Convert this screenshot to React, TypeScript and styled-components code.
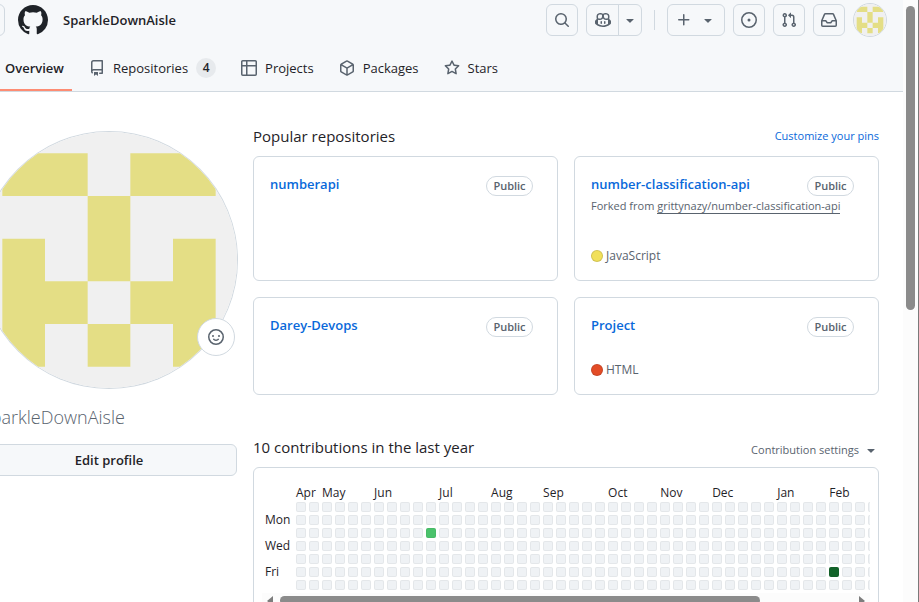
import React from "react";
import styled, { createGlobalStyle } from "styled-components";

const GlobalStyle = createGlobalStyle`
  *, *::before, *::after { box-sizing: border-box; }
  body {
    margin: 0;
    overflow: hidden;
    background: #ffffff;
    color: #1f2328;
    font-family: "Open Sans", "Noto Sans", sans-serif;
    font-size: 13px;
    line-height: 20px;
  }
  h1, h2, ul { margin: 0; padding: 0; }
  ul { list-style: none; }
  button { font: inherit; color: inherit; cursor: pointer; }
  a { color: inherit; text-decoration: none; }
`;

/* ---------- icons ---------- */

const paths = {
  mark: "M8 0c4.42 0 8 3.58 8 8a8.013 8.013 0 0 1-5.45 7.59c-.4.08-.55-.17-.55-.38 0-.27.01-1.13.01-2.2 0-.75-.25-1.23-.54-1.48 1.78-.2 3.65-.88 3.65-3.95 0-.88-.31-1.59-.82-2.15.08-.2.36-1.02-.08-2.12 0 0-.67-.22-2.2.82-.64-.18-1.32-.27-2-.27-.68 0-1.36.09-2 .27-1.53-1.03-2.2-.82-2.2-.82-.44 1.1-.16 1.92-.08 2.12-.51.56-.82 1.28-.82 2.15 0 3.06 1.86 3.75 3.64 3.95-.23.2-.44.55-.51 1.07-.46.21-1.61.55-2.33-.66-.15-.24-.6-.83-1.23-.82-.67.01-.27.38.01.53.34.19.73.9.82 1.13.16.45.68 1.31 2.69.94 0 .67.01 1.3.01 1.49 0 .21-.15.45-.55.38A7.995 7.995 0 0 1 0 8c0-4.42 3.58-8 8-8Z",
  search:
    "M10.68 11.74a6 6 0 0 1-7.922-8.982 6 6 0 0 1 8.982 7.922l3.04 3.04a.749.749 0 0 1-.326 1.275.749.749 0 0 1-.734-.215ZM11.5 7a4.499 4.499 0 1 0-8.997 0A4.499 4.499 0 0 0 11.5 7Z",
  copilot:
    "M7.998 15.035c-4.562 0-7.873-2.914-7.998-3.749V9.338c.085-.628.677-1.686 1.588-2.065.013-.07.024-.143.036-.218.029-.183.06-.384.126-.612-.201-.508-.254-1.084-.254-1.656 0-.87.128-1.769.693-2.484.579-.733 1.494-1.124 2.724-1.261 1.206-.134 2.262.034 2.944.765.05.053.096.108.139.165.044-.057.094-.112.143-.165.682-.731 1.738-.899 2.944-.765 1.23.137 2.145.528 2.724 1.261.566.715.693 1.614.693 2.484 0 .572-.053 1.148-.254 1.656.066.228.098.429.126.612.012.076.024.148.037.218.924.385 1.522 1.471 1.591 2.095v1.872c0 .766-3.351 3.795-8.002 3.795Zm0-1.485c2.28 0 4.584-1.11 5.002-1.433V7.862l-.023-.116c-.49.21-1.075.291-1.727.291-1.146 0-2.059-.327-2.71-.991A3.222 3.222 0 0 1 8 6.303a3.24 3.24 0 0 1-.544.743c-.65.664-1.563.991-2.71.991-.652 0-1.236-.081-1.727-.291l-.023.116v4.255c.419.323 2.722 1.433 5.002 1.433ZM6.762 2.83c-.193-.206-.637-.413-1.682-.297-1.019.113-1.479.404-1.713.7-.247.312-.369.789-.369 1.554 0 .793.129 1.171.308 1.371.162.181.519.379 1.442.379.853 0 1.339-.235 1.638-.54.315-.322.527-.827.617-1.553.117-.935-.037-1.395-.241-1.614Zm4.155-.297c-1.044-.116-1.488.091-1.681.297-.204.219-.359.679-.242 1.614.091.726.303 1.231.618 1.553.299.305.784.54 1.638.54.922 0 1.28-.198 1.442-.379.179-.2.308-.578.308-1.371 0-.765-.123-1.242-.37-1.554-.233-.296-.693-.587-1.713-.7ZM6.25 9.037a.75.75 0 0 1 .75.75v1.501a.75.75 0 0 1-1.5 0V9.787a.75.75 0 0 1 .75-.75Zm4.25.75v1.501a.75.75 0 0 1-1.5 0V9.787a.75.75 0 0 1 1.5 0Z",
  caret:
    "m4.427 7.427 3.396 3.396a.25.25 0 0 0 .354 0l3.396-3.396A.25.25 0 0 0 11.396 7H4.604a.25.25 0 0 0-.177.427Z",
  plus: "M7.75 2a.75.75 0 0 1 .75.75V7h4.25a.75.75 0 0 1 0 1.5H8.5v4.25a.75.75 0 0 1-1.5 0V8.5H2.75a.75.75 0 0 1 0-1.5H7V2.75A.75.75 0 0 1 7.75 2Z",
  issue:
    "M8 9.5a1.5 1.5 0 1 0 0-3 1.5 1.5 0 0 0 0 3ZM8 0a8 8 0 1 1 0 16A8 8 0 0 1 8 0ZM1.5 8a6.5 6.5 0 1 0 13 0 6.5 6.5 0 0 0-13 0Z",
  pull: "M1.5 3.25a2.25 2.25 0 1 1 3 2.122v5.256a2.251 2.251 0 1 1-1.5 0V5.372A2.25 2.25 0 0 1 1.5 3.25Zm5.677-.177L9.573.677A.25.25 0 0 1 10 .854V2.5h1A2.5 2.5 0 0 1 13.5 5v5.628a2.251 2.251 0 1 1-1.5 0V5a1 1 0 0 0-1-1h-1v1.646a.25.25 0 0 1-.427.177L7.177 3.427a.25.25 0 0 1 0-.354ZM3.75 2.5a.75.75 0 1 0 0 1.5.75.75 0 0 0 0-1.5Zm0 9.5a.75.75 0 1 0 0 1.5.75.75 0 0 0 0-1.5Zm8.25.75a.75.75 0 1 0 1.5 0 .75.75 0 0 0-1.5 0Z",
  inbox:
    "M2.8 2.06A1.75 1.75 0 0 1 4.41 1h7.18c.7 0 1.333.417 1.61 1.06l2.74 6.395c.04.093.06.194.06.295v4.5A1.75 1.75 0 0 1 14.25 15H1.75A1.75 1.75 0 0 1 0 13.25v-4.5c0-.101.02-.202.06-.295Zm1.61.44a.25.25 0 0 0-.23.152L1.887 8H4.75a.75.75 0 0 1 .6.3L6.625 10h2.75l1.275-1.7a.75.75 0 0 1 .6-.3h2.863L11.82 2.652a.25.25 0 0 0-.23-.152Zm10.09 7h-2.875l-1.275 1.7a.75.75 0 0 1-.6.3h-3.5a.75.75 0 0 1-.6-.3L4.375 9.5H1.5v3.75c0 .138.112.25.25.25h12.5a.25.25 0 0 0 .25-.25Z",
  repo: "M2 2.5A2.5 2.5 0 0 1 4.5 0h8.75a.75.75 0 0 1 .75.75v12.5a.75.75 0 0 1-.75.75h-2.5a.75.75 0 0 1 0-1.5h1.75v-2h-8a1 1 0 0 0-.714 1.7.75.75 0 1 1-1.072 1.05A2.495 2.495 0 0 1 2 11.5Zm10.5-1h-8a1 1 0 0 0-1 1v6.708A2.486 2.486 0 0 1 4.5 9h8ZM5 12.25a.25.25 0 0 1 .25-.25h3.5a.25.25 0 0 1 .25.25v3.25a.25.25 0 0 1-.4.2l-1.45-1.087a.249.249 0 0 0-.3 0L5.4 15.7a.25.25 0 0 1-.4-.2Z",
  table:
    "M0 1.75C0 .784.784 0 1.75 0h12.5C15.216 0 16 .784 16 1.75v12.5A1.75 1.75 0 0 1 14.25 16H1.75A1.75 1.75 0 0 1 0 14.25ZM6.5 6.5v8h7.75a.25.25 0 0 0 .25-.25V6.5Zm8-1.5V1.75a.25.25 0 0 0-.25-.25H6.5V5Zm-13 1.5v7.75c0 .138.112.25.25.25H5v-8ZM5 5V1.5H1.75a.25.25 0 0 0-.25.25V5Z",
  pack: "m8.878.392 5.25 3.045c.54.314.872.89.872 1.514v6.098a1.75 1.75 0 0 1-.872 1.514l-5.25 3.045a1.75 1.75 0 0 1-1.756 0l-5.25-3.045A1.75 1.75 0 0 1 1 11.049V4.951c0-.624.332-1.201.872-1.514L7.122.392a1.75 1.75 0 0 1 1.756 0ZM7.875 1.69l-4.63 2.685L8 7.133l4.755-2.758-4.63-2.685a.248.248 0 0 0-.25 0ZM2.5 5.677v5.372c0 .09.047.171.125.216l4.625 2.683V8.432Zm6.25 8.271 4.625-2.683a.25.25 0 0 0 .125-.216V5.677L8.75 8.432Z",
  star: "M8 .25a.75.75 0 0 1 .673.418l1.882 3.815 4.21.612a.75.75 0 0 1 .416 1.279l-3.046 2.97.719 4.192a.751.751 0 0 1-1.088.791L8 12.347l-3.766 1.98a.75.75 0 0 1-1.088-.79l.72-4.194L.818 6.374a.75.75 0 0 1 .416-1.28l4.21-.611L7.327.668A.75.75 0 0 1 8 .25Zm0 2.445L6.615 5.5a.75.75 0 0 1-.564.41l-3.097.45 2.24 2.184a.75.75 0 0 1 .216.664l-.528 3.084 2.769-1.456a.75.75 0 0 1 .698 0l2.77 1.456-.53-3.084a.75.75 0 0 1 .216-.664l2.24-2.183-3.096-.45a.75.75 0 0 1-.564-.41L8 2.694Z",
  smiley:
    "M8 0a8 8 0 1 1 0 16A8 8 0 0 1 8 0ZM1.5 8a6.5 6.5 0 1 0 13 0 6.5 6.5 0 0 0-13 0ZM5.32 9.636a.75.75 0 0 1 1.038.175c.11.13.227.231.357.319.264.178.683.37 1.285.37s1.02-.192 1.285-.371c.13-.088.247-.192.357-.318a.75.75 0 0 1 1.222.87c-.2.26-.44.48-.73.67-.63.418-1.37.638-2.134.629-.946 0-1.652-.308-2.126-.63a3.331 3.331 0 0 1-.737-.67.75.75 0 0 1 .183-1.044ZM12 7a1 1 0 1 1-2 0 1 1 0 0 1 2 0ZM5 8a1 1 0 1 1 0-2 1 1 0 0 1 0 2Z",
  left: "M11 3v10L5 8Z",
  right: "M5 3v10l6-5Z",
};

type IconName = keyof typeof paths;

const Glyph = styled.svg`
  display: block;
  flex: none;
  fill: currentColor;
`;

const Icon = ({ name, size = 16 }: { name: IconName; size?: number }) => (
  <Glyph viewBox="0 0 16 16" width={size} height={size} aria-hidden="true">
    <path d={paths[name]} fillRule={name === "mark" ? "evenodd" : undefined} />
  </Glyph>
);

const IdenticonSvg = styled.svg`
  display: block;
  width: 100%;
  height: 100%;
  border-radius: 50%;
`;

const identiconRows = ["11011", "00100", "10101", "11011", "10101"];

const identiconPath = identiconRows
  .flatMap((row, y) =>
    [...row].map((on, x) => (on === "1" ? `M${35 + x * 70} ${35 + y * 70}h70v70h-70z` : ""))
  )
  .join("");

const Identicon = () => (
  <IdenticonSvg viewBox="0 0 420 420" role="img" aria-label="Profile picture">
    <rect width="420" height="420" fill="#f0f0f0" />
    <path d={identiconPath} fill="#e4de85" />
  </IdenticonSvg>
);

/* ---------- frame ---------- */

const Frame = styled.div`
  display: flex;
  height: 100vh;
  overflow: hidden;
`;

const Page = styled.div`
  flex: 1;
  min-width: 0;
  margin-left: -19px;
`;

const Track = styled.div`
  width: 16px;
  flex: none;
  padding: 6px 3px 0 3px;
  background: #fcfcfc;
  border-right: 1px solid #7a7a7a;
`;

const Thumb = styled.div`
  height: 304px;
  border-radius: 5px;
  background: #8b8b8b;
`;

/* ---------- header ---------- */

const Header = styled.header`
  display: flex;
  flex-direction: column;
  gap: 8px;
  padding-top: 4px;
  background: #f6f8fa;
  border-bottom: 1px solid #d1d9e0;
`;

const TopBar = styled.div`
  display: flex;
  align-items: center;
  justify-content: space-between;
  height: 32px;
  padding-right: 16px;
`;

const Brand = styled.div`
  display: flex;
  align-items: center;
`;

const LogoLink = styled.a`
  margin: 0 15px 0 13px;
`;

const Owner = styled.a`
  font-weight: 600;
`;

const Actions = styled.div`
  display: flex;
  align-items: center;
  gap: 8px;
`;

const ToolButton = styled.button<{ $wide?: boolean }>`
  display: flex;
  align-items: center;
  justify-content: center;
  gap: 8px;
  width: ${(p) => (p.$wide ? 58 : 32)}px;
  height: 32px;
  padding: 0;
  border: 1px solid #d1d9e0;
  border-radius: 6px;
  background: transparent;
  color: #59636e;
`;

const MenuButton = styled(ToolButton)`
  width: 24px;
`;

const Split = styled.div`
  display: flex;

  ${ToolButton}:first-child {
    width: 33px;
    border-radius: 6px 0 0 6px;
  }
  ${ToolButton}:last-child {
    width: 24px;
    margin-left: -1px;
    border-radius: 0 6px 6px 0;
  }
`;

const Divider = styled.span`
  width: 1px;
  height: 20px;
  margin: 0 4px;
  background: #d1d9e0;
`;

const SmallAvatar = styled.a`
  width: 34px;
  height: 34px;
  border: 1px solid #d1d9e0;
  border-radius: 50%;
`;

const Tabs = styled.nav`
  display: flex;
  gap: 9px;
  height: 47px;
  padding-left: 16px;
`;

const Tab = styled.a<{ $active?: boolean }>`
  display: flex;
  align-items: center;
  gap: 8px;
  padding: 2px 8px 0;
  border-bottom: 2px solid ${(p) => (p.$active ? "#fd8c73" : "transparent")};
  font-weight: ${(p) => (p.$active ? 600 : 400)};

  svg { color: #59636e; }
`;

const Counter = styled.span`
  min-width: 20px;
  padding: 0 6px;
  border-radius: 10px;
  background: #e7eaed;
  font-size: 12px;
  font-weight: 600;
  text-align: center;
`;

/* ---------- body ---------- */

const Body = styled.main`
  display: grid;
  grid-template-columns: 256px minmax(0, 1fr);
  column-gap: 16px;
  padding: 32px 24px 0 0;
`;

const Profile = styled.aside`
  padding-top: 8px;
`;

const AvatarWrap = styled.div`
  position: relative;
  width: 256px;
  height: 256px;
  border-radius: 50%;
  box-shadow: 0 0 0 1px #d1d9e0;
`;

const StatusButton = styled.button`
  position: absolute;
  right: 2px;
  bottom: 32px;
  display: flex;
  align-items: center;
  justify-content: center;
  width: 38px;
  height: 38px;
  border: 1px solid #d1d9e0;
  border-radius: 50%;
  background: #ffffff;
  color: #59636e;
`;

const Username = styled.h1`
  margin: 17px 0 15px;
  color: #59636e;
  font-size: 18px;
  font-weight: 300;
  line-height: 24px;
`;

const EditButton = styled.button`
  width: 100%;
  height: 32px;
  padding: 0;
  border: 1px solid #d1d9e0;
  border-radius: 6px;
  background: #f6f8fa;
  font-weight: 600;
`;

const SectionHead = styled.div`
  display: flex;
  align-items: center;
  justify-content: space-between;
  margin-bottom: 8px;
`;

const SectionTitle = styled.h2`
  font-size: 15px;
  font-weight: 400;
  line-height: 24px;
`;

const PinsLink = styled.a`
  color: #0969da;
  font-size: 11px;
`;

const CardGrid = styled.ul`
  display: grid;
  grid-template-columns: repeat(2, minmax(0, 1fr));
  gap: 16px;
  margin-bottom: 40px;
`;

const Card = styled.li`
  display: flex;
  flex-direction: column;
  min-height: 98px;
  padding: 16px;
  border: 1px solid #d1d9e0;
  border-radius: 6px;
  color: #59636e;
`;

const CardTop = styled.div`
  display: flex;
  justify-content: space-between;
  padding-right: 8px;
`;

const RepoLink = styled.a`
  color: #0969da;
  font-weight: 600;
  line-height: 22px;
`;

const Badge = styled.span`
  height: 20px;
  min-width: 47px;
  margin-top: 3px;
  border: 1px solid #d1d9e0;
  border-radius: 10px;
  font-size: 11px;
  font-weight: 600;
  line-height: 18px;
  text-align: center;
`;

const Fork = styled.p`
  margin: 0 0 32px;
  font-size: 11px;
  line-height: 20px;

  a { border-bottom: 1px solid #59636e; }
`;

const Language = styled.p`
  display: flex;
  align-items: center;
  gap: 3px;
  margin: auto 0 0;
  font-size: 12px;
  line-height: 16px;
`;

const Dot = styled.span<{ $color: string }>`
  width: 12px;
  height: 12px;
  border: 1px solid rgba(31, 35, 40, 0.15);
  border-radius: 50%;
  background: ${(p) => p.$color};
`;

const Settings = styled.button`
  display: flex;
  align-items: center;
  gap: 4px;
  padding: 6px 0 0;
  border: 0;
  background: none;
  color: #59636e;
  font-size: 11px;
  line-height: 18px;
`;

/* ---------- contribution calendar ---------- */

const Calendar = styled.section`
  padding: 15px 8px 16px;
  border: 1px solid #d1d9e0;
  border-radius: 6px;
`;

const Scroller = styled.div`
  overflow: hidden;
`;

const Graph = styled.table`
  table-layout: fixed;
  width: 720px;
  border-spacing: 3px;
  font-size: 12px;
  line-height: 10px;

  th {
    padding: 0;
    font-weight: 400;
    text-align: left;
    white-space: nowrap;
  }
  thead th { height: 13px; }
`;

const DayCol = styled.col`
  width: 10px;
`;

const LabelCol = styled.col`
  width: 28px;
`;

const shades = ["#eff2f5", "#4ac26b", "#116329"];

const Day = styled.td<{ $level: number }>`
  height: 10px;
  padding: 0;
  border-radius: 2px;
  background: ${(p) => shades[p.$level]};
  box-shadow: inset 0 0 0 1px rgba(31, 35, 40, 0.05);
`;

const ScrollBar = styled.div`
  display: flex;
  align-items: center;
  justify-content: space-between;
  height: 15px;
  background: #fcfcfc;
  color: #7d7d7d;
`;

const ScrollRail = styled.div`
  flex: 1;
  padding: 0 2px;
`;

const ScrollThumb = styled.div`
  width: 84%;
  height: 9px;
  border-radius: 5px;
  background: #8b8b8b;
`;

const months: [string, number][] = [
  ["Apr", 2], ["May", 4], ["Jun", 5], ["Jul", 4], ["Aug", 4], ["Sep", 5],
  ["Oct", 4], ["Nov", 4], ["Dec", 5], ["Jan", 4], ["Feb", 4], ["", 8],
];
const weekdays = ["", "Mon", "", "Wed", "", "Fri", ""];
const weeks = Array.from({ length: 53 }, (_, i) => i);
const levels: Record<string, number> = { "2-10": 1, "5-41": 2 };

interface Repo {
  name: string;
  fork?: string;
  language?: string;
  color?: string;
}

const repos: Repo[] = [
  { name: "numberapi" },
  {
    name: "number-classification-api",
    fork: "grittynazy/number-classification-api",
    language: "JavaScript",
    color: "#f1e05a",
  },
  { name: "Darey-Devops" },
  { name: "Project", language: "HTML", color: "#e34c26" },
];

const RepoCard = ({ repo }: { repo: Repo }) => (
  <Card>
    <CardTop>
      <RepoLink href="#">{repo.name}</RepoLink>
      <Badge>Public</Badge>
    </CardTop>
    {repo.fork && (
      <Fork>
        Forked from <a href="#">{repo.fork}</a>
      </Fork>
    )}
    {repo.language && (
      <Language>
        <Dot $color={repo.color ?? "#cccccc"} />
        {repo.language}
      </Language>
    )}
  </Card>
);

export default function App() {
  return (
    <>
      <GlobalStyle />
      <Frame>
        <Page>
          <Header>
            <TopBar>
              <Brand>
                <MenuButton aria-label="Open menu" />
                <LogoLink href="#" aria-label="Home">
                  <Icon name="mark" size={30} />
                </LogoLink>
                <Owner href="#">SparkleDownAisle</Owner>
              </Brand>
              <Actions>
                <ToolButton aria-label="Search"><Icon name="search" /></ToolButton>
                <Split>
                  <ToolButton aria-label="Copilot"><Icon name="copilot" /></ToolButton>
                  <ToolButton aria-label="Copilot menu"><Icon name="caret" /></ToolButton>
                </Split>
                <Divider />
                <ToolButton $wide aria-label="Create new"><Icon name="plus" /><Icon name="caret" /></ToolButton>
                <ToolButton aria-label="Issues"><Icon name="issue" /></ToolButton>
                <ToolButton aria-label="Pull requests"><Icon name="pull" /></ToolButton>
                <ToolButton aria-label="Notifications"><Icon name="inbox" /></ToolButton>
                <SmallAvatar href="#" aria-label="Account"><Identicon /></SmallAvatar>
              </Actions>
            </TopBar>
            <Tabs>
              <Tab href="#" $active>Overview</Tab>
              <Tab href="#"><Icon name="repo" />Repositories<Counter>4</Counter></Tab>
              <Tab href="#"><Icon name="table" />Projects</Tab>
              <Tab href="#"><Icon name="pack" />Packages</Tab>
              <Tab href="#"><Icon name="star" />Stars</Tab>
            </Tabs>
          </Header>
          <Body>
            <Profile>
              <AvatarWrap>
                <Identicon />
                <StatusButton aria-label="Set status"><Icon name="smiley" /></StatusButton>
              </AvatarWrap>
              <Username>SparkleDownAisle</Username>
              <EditButton>Edit profile</EditButton>
            </Profile>
            <div>
              <SectionHead>
                <SectionTitle>Popular repositories</SectionTitle>
                <PinsLink href="#">Customize your pins</PinsLink>
              </SectionHead>
              <CardGrid>
                {repos.map((repo) => <RepoCard key={repo.name} repo={repo} />)}
              </CardGrid>
              <SectionHead>
                <SectionTitle>10 contributions in the last year</SectionTitle>
                <Settings>Contribution settings<Icon name="caret" /></Settings>
              </SectionHead>
              <Calendar>
                <Scroller>
                  <Graph>
                    <colgroup>
                      <LabelCol />
                      {weeks.map((w) => <DayCol key={w} />)}
                    </colgroup>
                    <thead>
                      <tr>
                        <th />
                        {months.map(([name, span]) => <th key={name} colSpan={span} scope="col">{name}</th>)}
                      </tr>
                    </thead>
                    <tbody>
                      {weekdays.map((label, d) => (
                        <tr key={d}>
                          <th scope="row">{label}</th>
                          {weeks.map((w) => <Day key={w} $level={levels[`${d}-${w}`] ?? 0} />)}
                        </tr>
                      ))}
                    </tbody>
                  </Graph>
                </Scroller>
                <ScrollBar>
                  <Icon name="left" />
                  <ScrollRail><ScrollThumb /></ScrollRail>
                  <Icon name="right" />
                </ScrollBar>
              </Calendar>
            </div>
          </Body>
        </Page>
        <Track><Thumb /></Track>
      </Frame>
    </>
  );
}
